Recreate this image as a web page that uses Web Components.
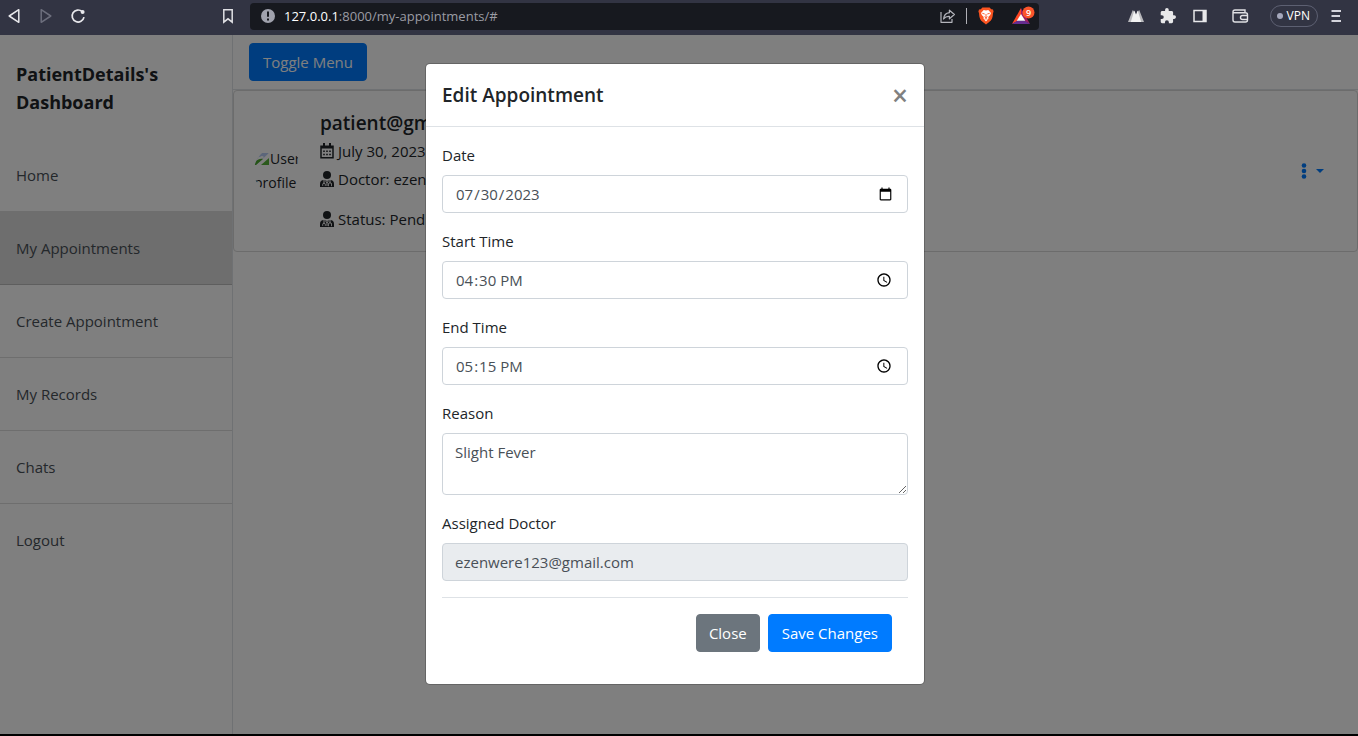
<!DOCTYPE html>
<html lang="en">
<head>
<meta charset="utf-8">
<title>My Appointments</title>
<style>
  html, body { margin: 0; height: 100%; }
  body {
    background: #000;
    color: #212529;
    font: 15px/24px "Segoe UI", "Open Sans", "Noto Sans", sans-serif;
  }
</style>
</head>
<body>
<app-window></app-window>

<template id="t-app-window">
  <style>
    :host { display: flex; flex-direction: column; min-height: 100vh; box-sizing: border-box; padding-bottom: 2px; }
    .page { flex: 1; position: relative; display: flex; background: #fff; }
    main { flex: 1; min-width: 0; }
    .bar { padding: 8px 16px; border-bottom: 1px solid #dee2e6; display: flex; }
    .overlay {
      position: absolute; inset: 0; padding: 28px 8px 28px 0; box-sizing: border-box;
      background: rgba(0, 0, 0, .5); display: flex; justify-content: center; align-items: flex-start;
    }
  </style>
  <browser-bar></browser-bar>
  <div class="page">
    <side-nav heading="PatientDetails's Dashboard">
      <nav-item>Home</nav-item>
      <nav-item active>My Appointments</nav-item>
      <nav-item>Create Appointment</nav-item>
      <nav-item>My Records</nav-item>
      <nav-item>Chats</nav-item>
      <nav-item last>Logout</nav-item>
    </side-nav>
    <main>
      <div class="bar"><ui-button>Toggle Menu</ui-button></div>
      <appointment-card></appointment-card>
    </main>
    <div class="overlay">
      <modal-dialog heading="Edit Appointment">
        <form-field label="Date" type="date" value="2023-07-30"></form-field>
        <form-field label="Start Time" type="time" value="16:30"></form-field>
        <form-field label="End Time" type="time" value="17:15"></form-field>
        <form-field label="Reason" type="textarea" value="Slight Fever"></form-field>
        <form-field label="Assigned Doctor" type="text" value="ezenwere123@gmail.com" readonly></form-field>
        <ui-button slot="footer" variant="secondary">Close</ui-button>
        <ui-button slot="footer">Save Changes</ui-button>
      </modal-dialog>
    </div>
  </div>
</template>

<template id="t-browser-bar">
  <style>
    :host {
      display: flex; align-items: center; height: 35px; padding: 0 14px 3px 6px; box-sizing: border-box;
      background: #323443; color: #e6e6ec; font-size: 13px; line-height: 18px;
    }
    button { all: unset; display: flex; cursor: pointer; }
    svg { display: block; }
    .nav { display: flex; gap: 16px; flex: 1; max-width: 214px; }
    .mark { margin: 0 14px 0 0; }
    .url { width: 59%; height: 27px; display: flex; align-items: center; background: #17191f; border-radius: 4px; padding: 0 4px 0 10px; box-sizing: border-box; }
    .addr { flex: 1; margin-left: 8px; color: #9b9ca4; }
    .addr b { font-weight: 400; color: #fff; }
    .sep { width: 1px; height: 16px; background: #b0b0b6; margin: 0 10px; }
    .brave { margin-right: 16px; }
    .tools { flex: 1; display: flex; justify-content: flex-end; align-items: center; gap: 16px; }
    .vpn { border: 1px solid #5d6072; border-radius: 11px; height: 20px; padding: 0 7px 0 6px; align-items: center; gap: 4px; font-size: 12px; color: #fff; }
    .vpn i { width: 6px; height: 6px; border-radius: 50%; background: #a5a8bc; }
    .wallet { margin: 0 5px 0 7px; }
    .menu { margin-left: -6px; }
  </style>
  <div class="nav">
    <button aria-label="Back"><svg width="16" height="16" viewBox="0 0 16 16" fill="none" stroke="#e8e8ec" stroke-width="1.5" stroke-linejoin="round"><path d="M12.8 1.7v12.6L3.2 8z"/></svg></button>
    <button aria-label="Forward"><svg width="16" height="16" viewBox="0 0 16 16" fill="none" stroke="#6c6e7c" stroke-width="1.5" stroke-linejoin="round"><path d="M3.2 1.7v12.6L12.8 8z"/></svg></button>
    <button aria-label="Reload"><svg width="16" height="16" viewBox="0 0 16 16" fill="none" stroke="#e8e8ec" stroke-width="1.7"><path d="M12.2 3.6A6 6 0 1 0 14 9.2"/><circle cx="12.6" cy="4" r="2" fill="#e8e8ec" stroke="none"/></svg></button>
  </div>
  <button class="mark" aria-label="Bookmark"><svg width="16" height="16" viewBox="0 0 16 16" fill="none" stroke="#e0e0e4" stroke-width="1.5"><path d="M3.8 1.8h8.4v12.4L8 10.8l-4.2 3.4z"/></svg></button>
  <div class="url">
    <svg width="16" height="16" viewBox="0 0 16 16"><circle cx="8" cy="8" r="7" fill="#a0a2ad"/><path d="M8 3.6v5.2M8 10.4v2" stroke="#17191f" stroke-width="2"/></svg>
    <span class="addr"><b>127.0.0.1</b>:8000/my-appointments/#</span>
    <button aria-label="Share"><svg width="17" height="16" viewBox="0 0 17 16" fill="none" stroke="#b4b5bc" stroke-width="1.2" stroke-linejoin="round"><path d="M2 4v10.3h11V11M10.4 2.2l5 4.3-5 4.3V8.4C7.6 8.2 6 9 4.6 11c.3-3.6 2.4-5.9 5.8-6.3z"/></svg></button>
    <span class="sep"></span>
    <button class="brave" aria-label="Shields"><svg width="18" height="18" viewBox="0 0 18 18"><path d="M5.4.6h7.2l1.6 1.7 1.8.3.6 2.2-.6 1.2c-.3 5.4-1.5 7.3-3.8 9L9 17.6 5.800 15C3.500 13.300 2.300 11.400 2 6l-.6-1.200.6-2.200 1.800-.3z" fill="#fb5420"/><path d="M9 3.400l2.300-.3L14 6l-.8 2-1.900 2 .2 1.600L9 14.600l-2.500-3 .2-1.600-1.900-2L4 6l2.700-2.900z" fill="#fff"/><path d="M5.300 6.300l2.400.7M12.700 6.300l-2.400.7M9 7v3M7.500 9.700L9 10.800l1.500-1.100M7.600 12.200L9 11.600l1.400.6" stroke="#fb5420" stroke-width=".9" fill="none"/></svg></button>
    <button aria-label="Rewards"><svg width="24" height="20" viewBox="0 0 24 20"><path d="M10 2L1 18l5.500-3L10 9z" fill="#ff4724"/><path d="M10 2l9 16-5.500-3L10 9z" fill="#9e1f63"/><path d="M1 18h18l-5.500-3.500h-7z" fill="#662d91"/><path d="M10 8l4.200 6.800H5.800z" fill="#fff"/><circle cx="17.500" cy="6.500" r="6" fill="#fb542b"/><text x="17.500" y="10" text-anchor="middle" fill="#fff" font-size="9" font-weight="600">9</text></svg></button>
  </div>
  <div class="tools">
    <button aria-label="Extension"><svg width="16" height="16" viewBox="0 0 16 16"><path d="M0 14L4.800 2l2.200 2.500L3.800 14zM16 14L11.200 2 9 4.500l3.200 9.500z" fill="#b8b8bc"/><path d="M2.800 14L6.300 2.500 8 6.500l1.700-4L13.200 14z" fill="#f2f2f2"/></svg></button>
    <button aria-label="Extensions"><svg width="16" height="16" viewBox="1 1 22 22" fill="#e8e8ea"><path d="M20.500 11H19V7c0-1.100-.9-2-2-2h-4V3.500a2.500 2.500 0 0 0-5 0V5H4c-1.100 0-2 .9-2 2v3.800h1.500a2.700 2.700 0 0 1 0 5.400H2V20c0 1.100.9 2 2 2h3.800v-1.500a2.700 2.700 0 0 1 5.400 0V22H17c1.100 0 2-.9 2-2v-4h1.500a2.500 2.500 0 0 0 0-5z"/></svg></button>
    <button aria-label="Side panel"><svg width="16" height="16" viewBox="0 0 16 16"><path d="M2 2.500h12v11H2z" fill="none" stroke="#e8e8ea" stroke-width="1.500"/><path d="M10.500 2.500H14v11h-3.500z" fill="#e8e8ea"/></svg></button>
    <button class="wallet" aria-label="Wallet"><svg width="18" height="16" viewBox="0 0 18 16" fill="none" stroke="#e0e0e4" stroke-width="1.400"><path d="M14 4.800V2H4a2 2 0 0 0-2 2v8a2 2 0 0 0 2 2h10.500a2 2 0 0 0 2-2V6.800a2 2 0 0 0-2-2H2.400M16.500 7.500h-5a2 2 0 0 0 0 4h5"/></svg></button>
    <button class="vpn"><i></i>VPN</button>
    <button class="menu" aria-label="Menu"><svg width="16" height="16" viewBox="0 0 16 16" stroke="#d4d4dc" stroke-width="1.800"><path d="M3.500 3H13M3.500 8h8.500M3.500 13H13"/></svg></button>
  </div>
</template>

<template id="t-side-nav">
  <style>
    :host { display: block; width: 232px; border-right: 1px solid #dee2e6; }
    h2 { margin: 0; padding: 25px 16px 23px; font-size: 18px; line-height: 28px; font-weight: 700; }
  </style>
  <h2></h2>
  <nav><slot></slot></nav>
</template>

<template id="t-nav-item">
  <style>
    :host { display: block; border-bottom: 1px solid #dcdcdc; }
    :host([active]) { background: #dcdcdc; border-color: #bcbcbc; }
    :host([last]) { border: 0; }
    a { display: block; padding: 24px 16px; color: #495057; text-decoration: none; }
  </style>
  <a href="#"><slot></slot></a>
</template>

<template id="t-ui-button">
  <style>
    :host { display: block; }
    button { display: block; font: inherit; color: #fff; background: #007bff; border: 1px solid #007bff; border-radius: 4px; padding: 6px 13px; cursor: pointer; white-space: nowrap; }
    :host([variant="secondary"]) button { background: #6c757d; border-color: #6c757d; padding: 6px 12px; }
  </style>
  <button type="button"><slot></slot></button>
</template>

<template id="t-appointment-card">
  <style>
    :host { display: flex; align-items: center; border: 1px solid #d8d8d8; border-radius: 4px; padding: 20px 32px 20px 20px; }
    .avatar { width: 48px; height: 48px; border-radius: 50%; overflow: hidden; flex: none; font-size: 14px; line-height: 24px; white-space: nowrap; }
    .avatar svg { width: 16px; height: 16px; vertical-align: -4px; }
    .info { flex: 1; margin-left: 18px; }
    h5 { margin: 0 0 4px; font-size: 19px; line-height: 24px; font-weight: 600; }
    p { margin: 0; display: flex; align-items: center; gap: 4px; }
    p + p { margin-top: 4px; }
    p.status { margin-top: 16px; }
    button { all: unset; display: flex; align-items: center; gap: 8px; color: #007bff; cursor: pointer; }
    svg { display: inline-block; flex: none; }
  </style>
  <div class="avatar"><svg viewBox="0 0 16 16"><path d="M1 13V4a3 3 0 0 1 3-3h11L2 13z" fill="#b9cdf5"/><path d="M3 7a2 2 0 0 1 3-2 3 3 0 0 1 4 0L6 9H3z" fill="#fff"/><path d="M0 13c2-5 5-7 9-6l-7 6z" fill="#4ca82c"/><path d="M15 1v12H6z" fill="#fff"/><path d="M15 6v7H7z" fill="#57b338"/></svg>User<br>profile</div>
  <div class="info">
    <h5>patient@gmail.com</h5>
    <p><svg width="14" height="16" viewBox="0 0 14 16"><path d="M1 3.200h12v11.600H1z" fill="none" stroke="#212529" stroke-width="1.500"/><path d="M1 3h12v2.500H1zM3 0h2v3H3zM9 0h2v3H9z" fill="#212529"/><path d="M3.200 7.500h1.600v1.600H3.200zM6.200 7.500h1.600v1.600H6.200zM9.200 7.500h1.600v1.600H9.200zM3.200 10.700h1.600v1.600H3.200zM6.200 10.700h1.600v1.600H6.200zM9.200 10.700h1.600v1.600H9.200z" fill="#212529"/></svg>July 30, 2023</p>
    <p><svg width="14" height="16" viewBox="0 0 14 16"><circle cx="7" cy="4" r="4" fill="#212529"/><path d="M0 16v-3a4 4 0 0 1 4-4l3 1 3-1a4 4 0 0 1 4 4v3z" fill="#212529"/><path d="M4 9v3M2.700 14.800v-1.300a1.300 1.300 0 0 1 2.600 0v1.300M5.600 9.800L7 12l1.400-2.200M7 12v3M10 9v2.500M9 14.800h-.5v-1.600a1.500 1.500 0 0 1 3 0v1.600H11" fill="none" stroke="#fff" stroke-width="1"/></svg>Doctor: ezenwere123@gmail.com</p>
    <p class="status"><svg width="14" height="16" viewBox="0 0 14 16"><circle cx="7" cy="4" r="4" fill="#212529"/><path d="M0 16v-3a4 4 0 0 1 4-4l3 1 3-1a4 4 0 0 1 4 4v3z" fill="#212529"/><path d="M4 9v3M2.700 14.800v-1.300a1.300 1.300 0 0 1 2.600 0v1.300M5.600 9.800L7 12l1.400-2.200M7 12v3M10 9v2.500M9 14.800h-.5v-1.600a1.500 1.500 0 0 1 3 0v1.600H11" fill="none" stroke="#fff" stroke-width="1"/></svg>Status: Pending</p>
  </div>
  <button aria-label="Appointment actions"><svg width="6" height="16" viewBox="0 0 6 16" fill="#007bff"><circle cx="3" cy="2.500" r="2.300"/><circle cx="3" cy="8" r="2.300"/><circle cx="3" cy="13.500" r="2.300"/></svg><svg width="10" height="6" viewBox="0 0 10 6" fill="#007bff"><path d="M1 1h8L5 5z"/></svg></button>
</template>

<template id="t-modal-dialog">
  <style>
    :host { display: block; width: 100%; max-width: 500px; box-sizing: border-box; background: #fff; background-clip: padding-box; border: 1px solid rgba(0, 0, 0, .2); border-radius: 5px; }
    header { display: flex; justify-content: space-between; align-items: center; padding: 16px; border-bottom: 1px solid #dee2e6; }
    h5 { margin: 0; font-size: 19px; line-height: 30px; font-weight: 600; }
    header button { all: unset; font-size: 28px; line-height: 30px; font-weight: 600; color: #808080; cursor: pointer; }
    .body { padding: 16px; }
    footer { display: flex; justify-content: flex-end; gap: 8px; padding: 16px; border-top: 1px solid #dee2e6; }
  </style>
  <header><h5></h5><button aria-label="Close dialog">×</button></header>
  <div class="body">
    <slot></slot>
    <footer><slot name="footer"></slot></footer>
  </div>
</template>

<template id="t-form-field">
  <style>
    :host { display: block; margin-bottom: 16px; }
    label { display: block; margin-bottom: 8px; }
    .control { display: block; width: 100%; height: 38px; box-sizing: border-box; margin: 0; padding: 6px 12px; font: inherit; color: #495057; background: #fff; border: 1px solid #ced4da; border-radius: 4px; }
    textarea.control { height: auto; resize: vertical; overflow: auto; }
    .control:read-only { background: #e9ecef; }
    .control:focus { outline: none; border-color: #80bdff; }
  </style>
  <label for="control"></label>
</template>

<script>
  class BaseElement extends HTMLElement {
    constructor() {
      super();
      const template = document.getElementById('t-' + this.localName);
      this.attachShadow({ mode: 'open' }).append(template.content.cloneNode(true));
    }
  }

  const headed = (selector) => class extends BaseElement {
    connectedCallback() {
      this.shadowRoot.querySelector(selector).textContent = this.getAttribute('heading');
    }
  };

  class FormField extends BaseElement {
    connectedCallback() {
      if (this.control) return;
      const type = this.getAttribute('type');
      this.shadowRoot.querySelector('label').textContent = this.getAttribute('label');
      const control = document.createElement(type === 'textarea' ? 'textarea' : 'input');
      if (type === 'textarea') control.rows = 2;
      else control.type = type;
      control.id = 'control';
      control.className = 'control';
      control.value = this.getAttribute('value');
      control.readOnly = this.hasAttribute('readonly');
      this.control = control;
      this.shadowRoot.append(control);
    }
  }

  customElements.define('browser-bar', class extends BaseElement {});
  customElements.define('nav-item', class extends BaseElement {});
  customElements.define('side-nav', headed('h2'));
  customElements.define('ui-button', class extends BaseElement {});
  customElements.define('appointment-card', class extends BaseElement {});
  customElements.define('form-field', FormField);
  customElements.define('modal-dialog', headed('h5'));
  customElements.define('app-window', class extends BaseElement {});
</script>
</body>
</html>
